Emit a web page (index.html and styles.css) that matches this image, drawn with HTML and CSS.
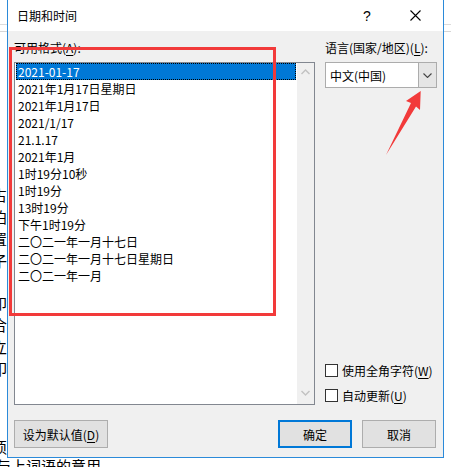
FILE: index.html
```html
<!DOCTYPE html>
<html lang="zh-CN">
<head>
    <meta charset="UTF-8">
    <meta name="viewport" content="width=device-width, initial-scale=1.0">
    <title>日期和时间</title>
    <link rel="stylesheet" href="styles.css">
</head>
<body>
    <div class="desktop">
        <div class="doc">
            <div class="ruler"></div>
            <div class="doc-lines first">
                <p>占</p><p>泊</p><p>置</p><p>子</p>
            </div>
            <div class="doc-lines second">
                <p>卬</p><p>合</p><p>立</p><p>叩</p>
            </div>
            <div class="doc-lines third">
                <p>须</p>
                <p class="tail">与上词语的意用</p>
            </div>
        </div>

        <div class="dialog">
            <div class="titlebar">
                <span class="title">日期和时间</span>
                <span class="help">?</span>
                <span class="close">
                    <svg width="11" height="11" viewBox="0 0 11 11"><path d="M0.5 0.5 L10.5 10.5 M10.5 0.5 L0.5 10.5" stroke="#000" stroke-width="1.1" fill="none"/></svg>
                </span>
            </div>
            <div class="panel">
                <div class="columns">
                    <div class="col-left">
                        <div class="label">可用格式(<u>A</u>):</div>
                        <div class="listbox">
                            <ul class="items">
                                <li class="selected">2021-01-17</li>
                                <li>2021年1月17日星期日</li>
                                <li>2021年1月17日</li>
                                <li>2021/1/17</li>
                                <li>21.1.17</li>
                                <li>2021年1月</li>
                                <li>1时19分10秒</li>
                                <li>1时19分</li>
                                <li>13时19分</li>
                                <li>下午1时19分</li>
                                <li>二〇二一年一月十七日</li>
                                <li>二〇二一年一月十七日星期日</li>
                                <li>二〇二一年一月</li>
                            </ul>
                            <div class="scrollbar">
                                <svg width="9" height="6" viewBox="0 0 9 6"><path d="M0.5 5 L4.5 1 L8.5 5" stroke="#c2c2c2" stroke-width="1.4" fill="none"/></svg>
                                <svg width="9" height="6" viewBox="0 0 9 6"><path d="M0.5 1 L4.5 5 L8.5 1" stroke="#c2c2c2" stroke-width="1.4" fill="none"/></svg>
                            </div>
                        </div>
                    </div>
                    <div class="col-right">
                        <div class="label">语言(国家/地区)(<u>L</u>):</div>
                        <div class="combo">
                            <span class="combo-text">中文(中国)</span>
                            <span class="combo-btn">
                                <svg width="9" height="5" viewBox="0 0 9 5"><path d="M0.5 0.5 L4.5 4.5 L8.5 0.5" stroke="#444" stroke-width="1.1" fill="none"/></svg>
                            </span>
                        </div>
                        <div class="checks">
                            <label class="check"><span class="box"></span><span>使用全角字符(<u>W</u>)</span></label>
                            <label class="check"><span class="box"></span><span>自动更新(<u>U</u>)</span></label>
                        </div>
                    </div>
                </div>
                <div class="actions">
                    <button class="btn wide">设为默认值(<u>D</u>)</button>
                    <div class="actions-right">
                        <button class="btn primary">确定</button>
                        <button class="btn">取消</button>
                    </div>
                </div>
            </div>
        </div>

        <div class="mark-box"></div>
        <svg class="mark-arrow" width="451" height="467" viewBox="0 0 451 467">
            <polygon points="420.7,91 420,110 416,106.5 386,155 411,103 406,101" fill="#f23a3a"/>
        </svg>
    </div>
</body>
</html>
```

FILE: styles.css
```css
* {
    box-sizing: border-box;
}
body {
    margin: 0;
    background: #fff;
    font-family: "Noto Sans CJK SC", "Noto Sans", sans-serif;
    font-size: 12px;
    color: #000;
    overflow: hidden;
}
.desktop {
    position: relative;
    width: 451px;
    height: 467px;
    overflow: hidden;
}

/* document behind the dialog */
.doc {
    font-size: 15px;
    line-height: 22px;
}
.ruler {
    height: 32px;
    border-bottom: 1px solid #d6d6d6;
    position: relative;
}
.ruler::after {
    content: "";
    position: absolute;
    left: 0;
    right: 0;
    top: 24px;
    border-top: 1px solid #dcdcdc;
}
.doc-lines {
    margin-left: -8px;
}
.doc-lines p {
    margin: 0;
}
.doc-lines.first {
    margin-top: 152px;
}
.doc-lines.second {
    margin-top: 20px;
}
.doc-lines.third {
    margin-top: 56px;
}
.doc-lines .tail {
    margin-left: 4px;
    margin-top: -3px;
}

/* dialog window */
.dialog {
    position: absolute;
    left: 7px;
    top: 0;
    width: 437px;
    height: 458px;
    border: 1px solid #2b8ad9;
    border-top: none;
    background: #f0f0f0;
    display: flex;
    flex-direction: column;
}
.titlebar {
    height: 31px;
    background: #fff;
    display: flex;
    align-items: center;
    padding-left: 9px;
    padding-right: 5px;
}
.title {
    flex: 1;
    font-size: 12px;
}
.help {
    width: 30px;
    text-align: center;
    font-family: "Liberation Sans", sans-serif;
    font-size: 14px;
    margin-right: 10px;
}
.close {
    width: 46px;
    display: flex;
    justify-content: center;
}

.panel {
    flex: 1;
    padding: 7px 6px 0 6px;
}
.columns {
    display: grid;
    grid-template-columns: 301px 112px;
    column-gap: 10px;
}
.label {
    line-height: 20px;
    margin-bottom: 4px;
}
.label u,
.check u,
.btn u {
    text-decoration: underline;
    text-underline-offset: 2px;
}

/* list box */
.listbox {
    height: 343px;
    border: 1px solid #828790;
    background: #fff;
    display: flex;
}
.items {
    flex: 1;
    list-style: none;
    margin: 0;
    padding: 0;
}
.items li {
    height: 17px;
    line-height: 17px;
    padding-left: 2px;
    margin: 0 1px;
    white-space: nowrap;
}
.items li.selected {
    background: #0078d7;
    color: #fff;
    outline: 1px dotted #000;
    outline-offset: -1px;
}
.scrollbar {
    width: 17px;
    background: #f0f0f0;
    display: flex;
    flex-direction: column;
    justify-content: space-between;
    align-items: center;
    padding: 6px 0 8px;
}

/* right column */
.col-right {
    display: flex;
    flex-direction: column;
}
.combo {
    height: 26px;
    border: 1px solid #acacac;
    background: #fff;
    display: flex;
    align-items: center;
}
.combo-text {
    flex: 1;
    padding-left: 4px;
}
.combo-btn {
    width: 18px;
    height: 24px;
    background: #e5e5e5;
    border-left: 1px solid #acacac;
    display: flex;
    align-items: center;
    justify-content: center;
}
.checks {
    margin-top: auto;
    display: flex;
    flex-direction: column;
    gap: 5px;
}
.check {
    display: flex;
    align-items: center;
    height: 20px;
    gap: 4px;
    white-space: nowrap;
}
.box {
    flex: none;
    width: 13px;
    height: 13px;
    border: 1px solid #333;
    background: #fff;
}

/* buttons */
.actions {
    margin-top: 15px;
    display: flex;
    justify-content: space-between;
}
.actions-right {
    display: flex;
    gap: 10px;
    margin-right: 1px;
}
.btn {
    height: 28px;
    width: 74px;
    padding: 0;
    background: #e1e1e1;
    border: 1px solid #adadad;
    font-family: inherit;
    font-size: 12px;
    color: #000;
}
.btn.wide {
    width: 94px;
}
.btn.primary {
    border: 2px solid #0078d7;
}

/* red annotation drawn over the screenshot */
.mark-box {
    position: absolute;
    left: 9px;
    top: 47px;
    width: 267px;
    height: 269px;
    border: 3px solid #f23a3a;
}
.mark-arrow {
    position: absolute;
    left: 0;
    top: 0;
}
```
